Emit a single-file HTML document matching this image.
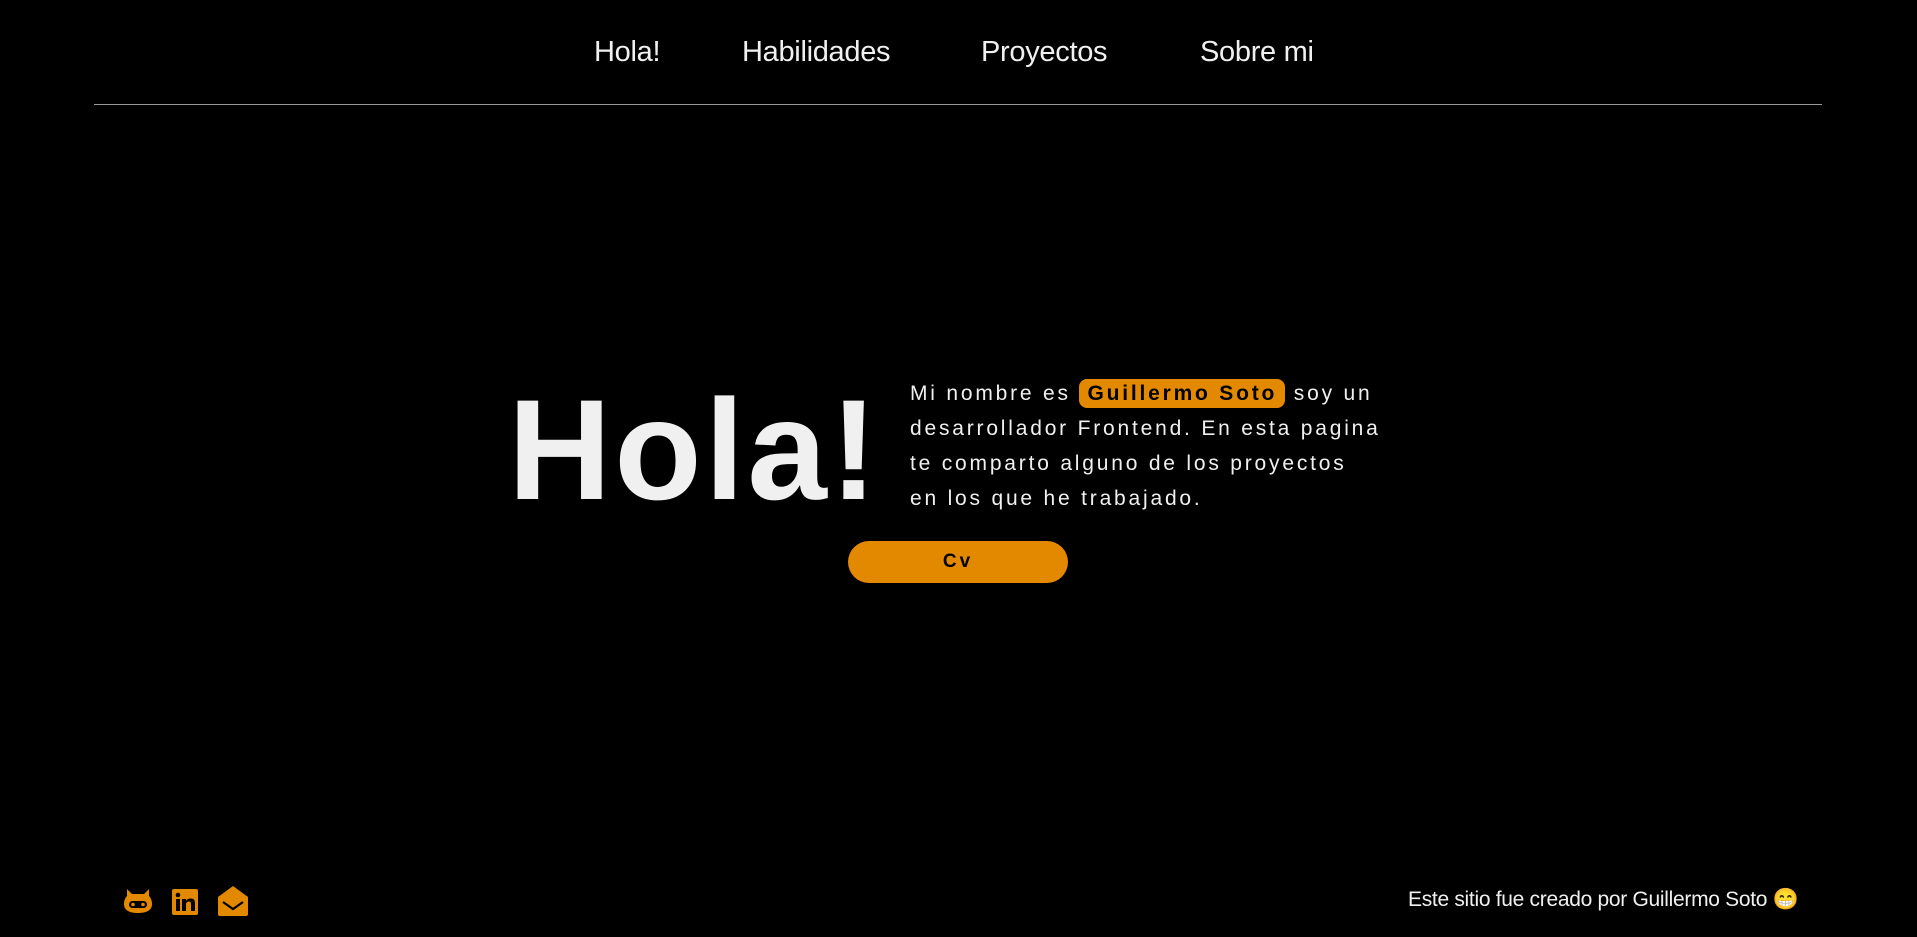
<!DOCTYPE html>
<html><head><meta charset="utf-8"><style>
body{margin:0;width:1917px;height:937px;background:#000;color:#f0f0f0;font-family:"Liberation Sans",sans-serif;position:relative;overflow:hidden}
.nav a{position:absolute;top:36px;font-size:29px;color:#f0f0f0;text-decoration:none;letter-spacing:-0.3px}
.line{position:absolute;left:94px;width:1728px;top:104px;height:1px;background:#9a9a9a}
.big{position:absolute;left:508px;top:379px;font-size:143px;font-weight:bold;letter-spacing:3px;color:#f0f0f0;line-height:1}
.p{position:absolute;left:910px;top:376px;width:520px;white-space:nowrap;font-size:21px;letter-spacing:2.8px;line-height:35px;color:#f0f0f0}
.hl{background:#e38900;color:#000;font-weight:bold;border-radius:8px;padding:3px 8px;}
.btn{position:absolute;left:848px;top:541px;width:220px;height:42px;border-radius:21px;background:#e38900;color:#000;font-weight:bold;font-size:19px;letter-spacing:3px;text-align:center;line-height:42px}
.foot{position:absolute;left:1408px;top:888px;font-size:21px;color:#f0f0f0;letter-spacing:-0.3px}
svg{position:absolute}
</style></head><body>
<div class="nav"><a style="left:594px">Hola!</a><a style="left:742px">Habilidades</a><a style="left:981px">Proyectos</a><a style="left:1200px">Sobre mi</a></div>
<div class="line"></div>
<div class="big">Hola!</div>
<div class="p">Mi nombre es <span class="hl">Guillermo Soto</span> soy un<br>desarrollador Frontend. En esta pagina<br>te comparto alguno de los proyectos<br>en los que he trabajado.</div>
<div class="btn">Cv</div>
<svg style="left:124px;top:889px" width="28" height="24" viewBox="0 0 28 24"><path fill="#e38900" d="M3 0l5 5h12l5-5v7c2 2 3 5 3 8 0 6-5 9-14 9S0 21 0 15c0-3 1-6 3-8z"/><rect x="5" y="12" width="18" height="7" rx="3.5" fill="#000"/><circle cx="9" cy="15.5" r="1.8" fill="#e38900"/><circle cx="19" cy="15.5" r="1.8" fill="#e38900"/></svg>
<svg style="left:172px;top:889px" width="26" height="26" viewBox="0 0 26 26"><rect width="26" height="26" rx="2" fill="#e38900"/><rect x="4" y="10" width="4" height="12" fill="#000"/><circle cx="6" cy="6" r="2.3" fill="#000"/><path fill="#000" d="M10 10h4v2c1-2 3-2.5 5-2.5 3 0 4 2 4 5V22h-4v-7c0-1.5-.5-2.5-2-2.5s-3 1-3 2.5v7h-4z"/></svg>
<svg style="left:218px;top:886px" width="30" height="30" viewBox="0 0 30 30"><path fill="#e38900" d="M15 0l15 11v17a2 2 0 0 1-2 2H2a2 2 0 0 1-2-2V11z"/><path d="M5 16l10 7 10-7" stroke="#000" stroke-width="2.2" fill="none"/></svg>
<div class="foot">Este sitio fue creado por Guillermo Soto 😁</div>
</body></html>
